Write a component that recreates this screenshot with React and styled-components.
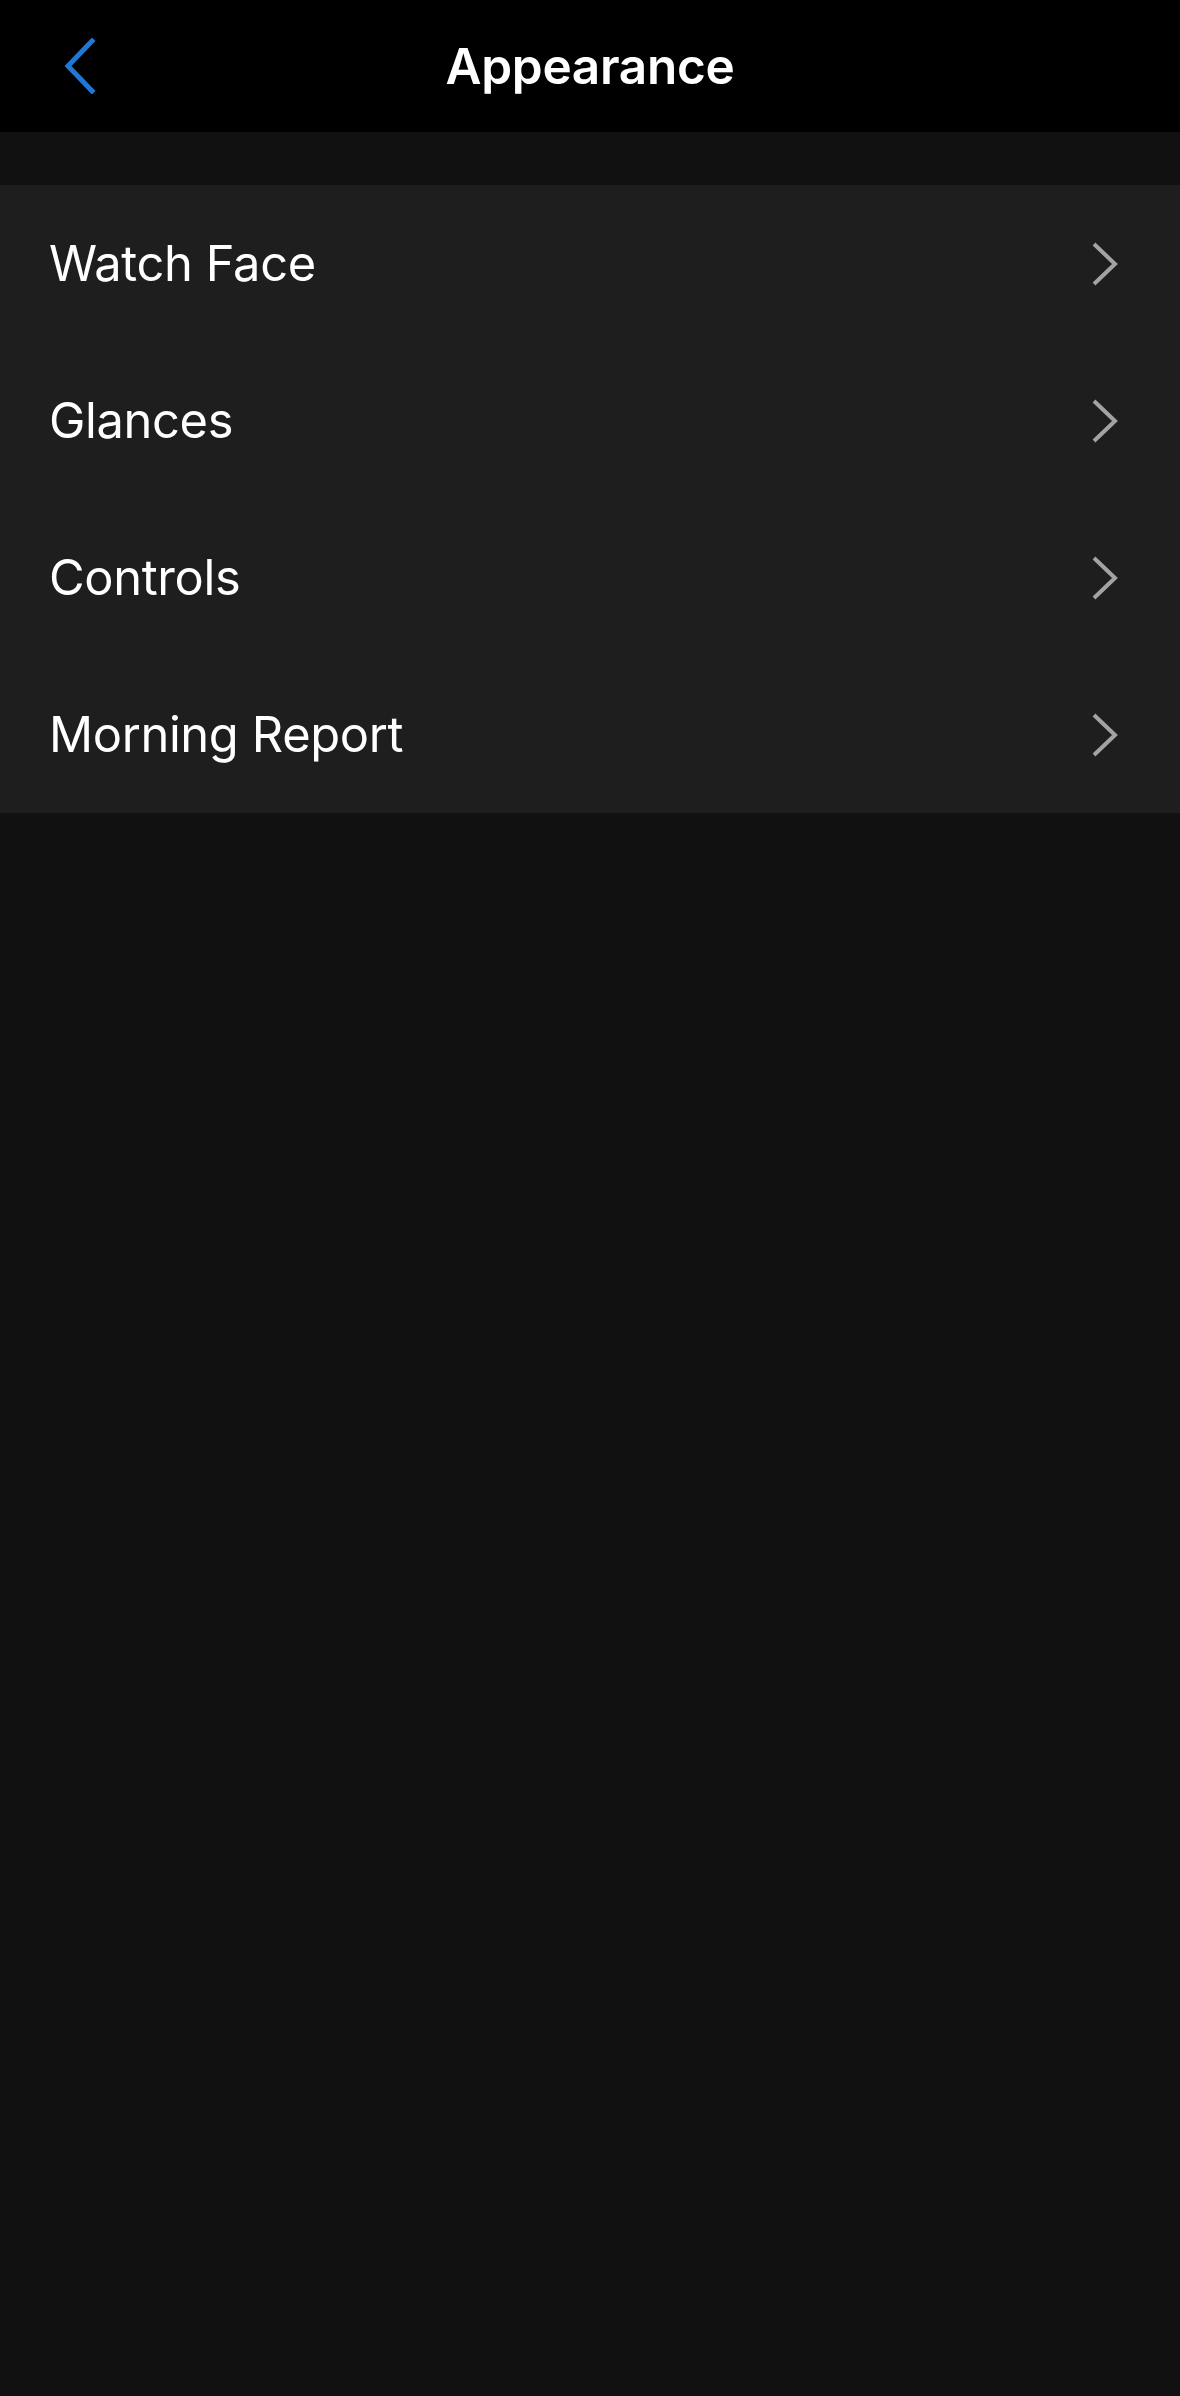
import React from "react";
import styled, { createGlobalStyle } from "styled-components";

const GlobalStyle = createGlobalStyle`
  html, body {
    margin: 0;
    padding: 0;
    background: #111111;
  }

  body {
    font-family: Inter, "Liberation Sans", sans-serif;
    -webkit-font-smoothing: antialiased;
  }
`;

const Page = styled.div`
  min-height: 2396px;
  background: #111111;
  display: flex;
  flex-direction: column;
`;

const Header = styled.header`
  height: 132px;
  background: #000000;
  display: grid;
  grid-template-columns: 132px 1fr 132px;
  align-items: center;
`;

const BackButton = styled.button`
  background: none;
  border: 0;
  padding: 0 0 0 62px;
  display: flex;
  align-items: center;
  height: 100%;
  cursor: pointer;
`;

const Title = styled.h1`
  margin: 0;
  text-align: center;
  color: #ffffff;
  font-size: 49.5px;
  font-weight: 600;
  letter-spacing: -0.3px;
`;

const Spacer = styled.div`
  height: 53px;
`;

const List = styled.ul`
  list-style: none;
  margin: 0;
  padding: 0;
  background: #1e1e1e;
`;

const Row = styled.li`
  height: 157px;
  display: flex;
  align-items: center;
  justify-content: space-between;
  padding: 0 61px 0 49px;
  cursor: pointer;
`;

const Label = styled.span`
  color: #ffffff;
  font-size: 48.8px;
  font-weight: 400;
  letter-spacing: -0.35px;
`;

const BackIcon = () => (
  <svg width="34" height="56" viewBox="0 0 34 56" fill="none">
    <path
      d="M30 3 L6 28 L30 53"
      stroke="#1f77d6"
      strokeWidth="5"
      strokeLinecap="square"
    />
  </svg>
);

const Chevron = () => (
  <svg width="28" height="46" viewBox="0 0 28 46" fill="none">
    <path
      d="M3 3 L24 23 L3 43"
      stroke="#a3a3a3"
      strokeWidth="4"
    />
  </svg>
);

const items = ["Watch Face", "Glances", "Controls", "Morning Report"];

export default function App() {
  return (
    <>
      <GlobalStyle />
      <Page>
        <Header>
          <BackButton aria-label="Back">
            <BackIcon />
          </BackButton>
          <Title>Appearance</Title>
          <div />
        </Header>
        <Spacer />
        <List>
          {items.map((item) => (
            <Row key={item}>
              <Label>{item}</Label>
              <Chevron />
            </Row>
          ))}
        </List>
      </Page>
    </>
  );
}
